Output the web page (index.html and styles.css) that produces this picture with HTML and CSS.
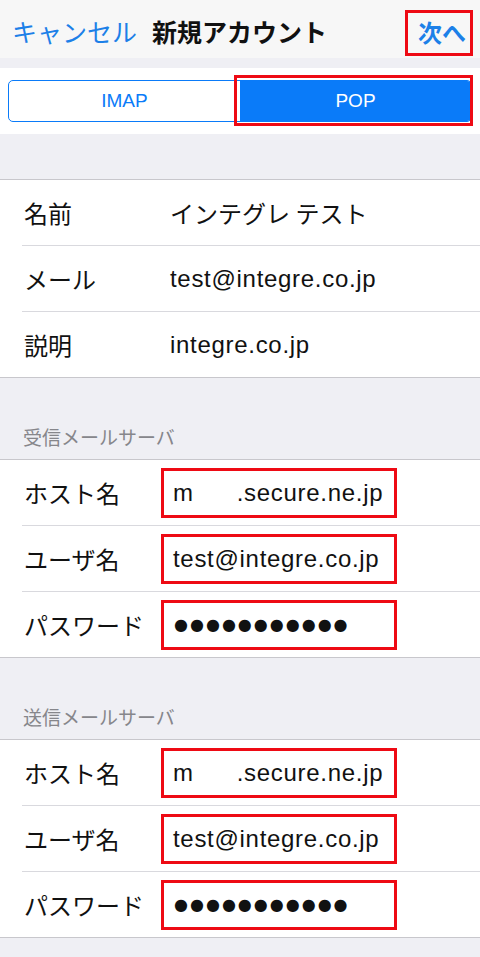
FILE: index.html
```html
<!DOCTYPE html>
<html lang="ja">
<head>
  <meta charset="UTF-8" />
  <meta name="viewport" content="width=device-width, initial-scale=1" />
  <title>新規アカウント</title>
  <link rel="stylesheet" href="styles.css">
</head>
<body>

<header class="navbar">
  <a class="nav-btn" href="#">キャンセル</a>
  <h1 class="nav-title">新規アカウント</h1>
  <a class="nav-btn nav-next" href="#">次へ</a>
</header>

<div class="seg-panel">
  <div class="segmented">
    <span class="seg">IMAP</span>
    <span class="seg seg-on">POP</span>
  </div>
</div>

<section class="group first-group">
  <div class="row"><span class="label">名前</span><span class="value jp">インテグレ テスト</span></div>
  <div class="row"><span class="label">メール</span><span class="value">test@integre.co.jp</span></div>
  <div class="row"><span class="label">説明</span><span class="value">integre.co.jp</span></div>
</section>

<h2 class="section-title">受信メールサーバ</h2>
<section class="group">
  <div class="row"><span class="label">ホスト名</span><span class="value boxed">m<span class="masked"></span>.secure.ne.jp</span></div>
  <div class="row"><span class="label">ユーザ名</span><span class="value boxed">test@integre.co.jp</span></div>
  <div class="row"><span class="label">パスワード</span><span class="value boxed dots">●●●●●●●●●●●</span></div>
</section>

<h2 class="section-title">送信メールサーバ</h2>
<section class="group">
  <div class="row"><span class="label">ホスト名</span><span class="value boxed">m<span class="masked"></span>.secure.ne.jp</span></div>
  <div class="row"><span class="label">ユーザ名</span><span class="value boxed">test@integre.co.jp</span></div>
  <div class="row"><span class="label">パスワード</span><span class="value boxed dots">●●●●●●●●●●●</span></div>
</section>

</body>
</html>
```

FILE: styles.css
```css
* { margin: 0; padding: 0; box-sizing: border-box; }
body { background: #efeff4; color: #111; font-family: "Liberation Sans", "Noto Sans CJK JP", sans-serif; }

.navbar { height: 58px; display: flex; align-items: center; gap: 15px; padding: 4px 7px 0 12px; background: #f7f7f7; }
.nav-btn { color: #1c80e8; text-decoration: none; font-size: 25px; font-family: "Noto Sans CJK JP", sans-serif; }
.nav-title { font-size: 25px; font-weight: 700; font-family: "Noto Sans CJK JP", sans-serif; color: #111; }
.nav-next { margin-left: auto; align-self: flex-start; margin-top: 6px; height: 46px; display: flex; align-items: center; padding: 0 4px 4px 10px; border: 3px solid #ee0a14; font-weight: 700; font-size: 24px; }

.seg-panel { margin-top: 10px; background: #fff; padding: 12px 8px; }
.segmented { display: flex; height: 42px; border: 1px solid #0a7bf9; border-radius: 5px; }
.seg { flex: 1; display: flex; align-items: center; justify-content: center; color: #0a7bf9; font-size: 19px; }
.seg-on { position: relative; background: #0a7bf9; color: #fff; border-radius: 0 4px 4px 0; }
.seg-on::after { content: ""; position: absolute; top: -6px; bottom: -5px; left: -6px; right: -2px; border: 3px solid #ee0a14; }

.group { background: #fff; border-top: 1px solid #c8c7cc; border-bottom: 1px solid #c8c7cc; }
.first-group { margin-top: 45px; }
.row { display: flex; align-items: center; height: 66px; margin-left: 22px; border-top: 1px solid #d9d9de; }
.row:first-child { height: 65px; border-top: 0; }
.label { width: 139px; padding-left: 2px; font-size: 24px; font-family: "Noto Sans CJK JP", sans-serif; color: #111; }
.value { padding-left: 9px; font-size: 24px; letter-spacing: 0.7px; color: #111; }
.value.jp { font-family: "Noto Sans CJK JP", sans-serif; letter-spacing: 0; }
.boxed { width: 236px; height: 50px; display: flex; align-items: center; border: 3px solid #ee0a14; }
.masked { display: inline-block; width: 43px; }
.dots { font-family: "DejaVu Sans", sans-serif; font-size: 16px; letter-spacing: 2px; padding-left: 10px; }

.section-title { padding: 47px 0 10px 23px; font-size: 19px; line-height: 24px; font-weight: 400; color: #86868b; font-family: "Noto Sans CJK JP", sans-serif; }
```
